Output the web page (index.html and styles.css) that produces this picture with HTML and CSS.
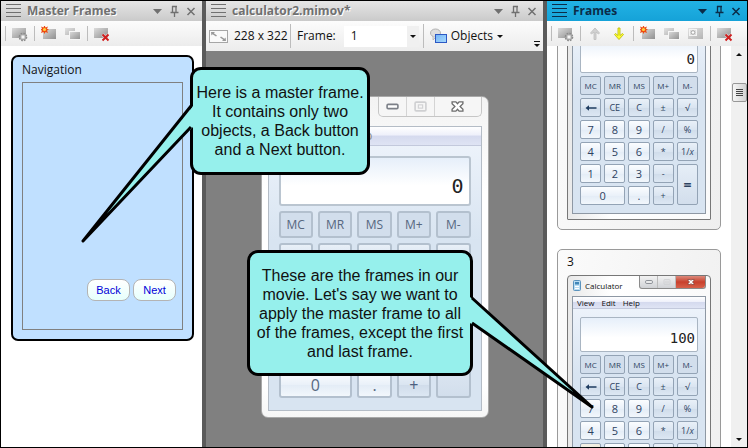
FILE: index.html
```
<!DOCTYPE html>
<html lang="en">
<head>
<meta charset="utf-8">
<title>calculator2.mimov</title>
<link rel="stylesheet" href="styles.css">
</head>
<body>
<svg class="defs" aria-hidden="true">
  <defs>
    <linearGradient id="grey" x1="0" y1="0" x2="1" y2="1"><stop offset="0" stop-color="#dcdcdc"/><stop offset="1" stop-color="#8f8f8f"/></linearGradient>
    <linearGradient id="pale" x1="0" y1="0" x2="1" y2="1"><stop offset="0" stop-color="#e2e2e2"/><stop offset="1" stop-color="#b4b4b4"/></linearGradient>
    <linearGradient id="blue" x1="0" y1="0" x2="1" y2="1"><stop offset="0" stop-color="#74b4f6"/><stop offset="1" stop-color="#a8dafc"/></linearGradient>
  </defs>
  <symbol id="i-lines" viewBox="0 0 15 14"><path d="M0 .5h15M0 4.500h15M0 8.500h15M0 12.500h15" stroke="currentColor" stroke-width="1"/></symbol>
  <symbol id="i-caret" viewBox="0 0 16 16"><path d="M4 6h9l-4.500 5z" fill="currentColor"/></symbol>
  <symbol id="i-pin" viewBox="0 0 16 16"><path d="M6 3.500h5M6.500 3v6M10 3v6M4.500 9.500h8M8.500 10v4" fill="none" stroke="currentColor" stroke-width="1.300"/></symbol>
  <symbol id="i-close" viewBox="0 0 16 16"><path d="M4.500 5l7 7M11.500 5l-7 7" stroke="currentColor" stroke-width="1.500"/></symbol>
  <symbol id="i-settings" viewBox="0 0 16 16"><rect x="0" y="2" width="14" height="10" fill="url(#grey)"/><circle cx="11" cy="11" r="3.200" fill="#c8c8c8" stroke="#8a8a8a" stroke-width="2.200" stroke-dasharray="1.500 1"/><circle cx="11" cy="11" r="2.800" fill="#d2d2d2" stroke="#999" stroke-width=".8"/><circle cx="11" cy="11" r="1" fill="#fff"/></symbol>
  <symbol id="i-new" viewBox="0 0 16 16"><rect x="2" y="3" width="13" height="10" fill="url(#grey)"/><path d="M3.500 -1l1 2.500 2.500-1-1 2.300 2 .9-2 .9 1 2.300-2.500-1-1 2-1-2-2.500 1 1-2.300-2-.9 2-.9-1-2.300 2.500 1z" fill="#ee4a10"/><circle cx="3.500" cy="3.500" r="1.600" fill="#ffd23c"/></symbol>
  <symbol id="i-copy" viewBox="0 0 16 16"><rect x="0" y="2" width="10" height="7" fill="url(#pale)"/><rect x="4.500" y="5.500" width="11" height="8" fill="url(#grey)" stroke="#f6f6f6"/></symbol>
  <symbol id="i-delete" viewBox="0 0 16 16"><rect x="0" y="2" width="14" height="10" fill="url(#grey)"/><path d="M8.500 8.500l6 6M14.500 8.500l-6 6" stroke="#fff" stroke-width="3.500" opacity=".5"/><path d="M8.500 8.500l6 6M14.500 8.500l-6 6" stroke="#cf2020" stroke-width="2"/></symbol>
  <symbol id="i-object" viewBox="0 0 16 16"><rect x="0" y="2" width="15" height="11" fill="url(#pale)"/><rect x="1.500" y="3.500" width="7" height="6" fill="#ddd" stroke="#f4f4f4"/><circle cx="5" cy="6.500" r="1.800" fill="#fff" stroke="#a8a8a8"/></symbol>
  <symbol id="i-up" viewBox="0 0 16 16"><path d="M8 2l4.500 5-1 1L9 6v7.500H7V6L4.500 8l-1-1z" fill="#d2d2d2" stroke="#bcbcbc" stroke-width=".8"/></symbol>
  <symbol id="i-down" viewBox="0 0 16 16"><path d="M8 13.500L3.500 8.500l1-1L7 9.500V2h2v7.500l2.500-2 1 1z" fill="#ffff2e" stroke="#bcbc14" stroke-width=".9"/></symbol>
  <symbol id="i-min" viewBox="0 0 12 6"><rect x="1" y="1" width="10" height="4" rx="1" fill="#fff" stroke="#7c8088" stroke-width="1.500"/></symbol>
  <symbol id="i-max" viewBox="0 0 12 10"><rect x="1" y="1" width="10" height="8" rx="1" fill="none" stroke="#cfd0d2" stroke-width="1.500"/><rect x="4" y="3.500" width="4" height="3" fill="none" stroke="#cfd0d2"/></symbol>
  <symbol id="i-x" viewBox="0 0 12 10"><path d="M1 .7h3.500L6 2.400 7.500.7H11v1.800L8.400 5 11 7.500v1.800H7.500L6 7.600 4.500 9.300H1V7.500L3.600 5 1 2.500z" fill="#fff" stroke="var(--x-edge)" stroke-width="1.200"/></symbol>
  <symbol id="i-back" viewBox="0 0 12 8"><path d="M.5 4L4 1.300v2h7.500v1.400H4v2z" fill="#1f3c60"/></symbol>
</svg>

<main class="app">
  <section class="panel">
    <header class="panel-head">
      <svg class="lines"><use href="#i-lines"/></svg>
      <h2>Master Frames</h2>
      <button class="tool" aria-label="Menu"><svg><use href="#i-caret"/></svg></button>
      <button class="tool" aria-label="Pin"><svg><use href="#i-pin"/></svg></button>
      <button class="tool" aria-label="Close"><svg><use href="#i-close"/></svg></button>
    </header>
    <div class="toolbar">
      <i class="sep"></i>
      <button class="icon-btn" aria-label="Properties"><svg><use href="#i-settings"/></svg></button>
      <i class="sep"></i>
      <button class="icon-btn" aria-label="New frame"><svg><use href="#i-new"/></svg></button>
      <button class="icon-btn" aria-label="Duplicate frame"><svg><use href="#i-copy"/></svg></button>
      <i class="sep"></i>
      <button class="icon-btn" aria-label="Delete frame"><svg><use href="#i-delete"/></svg></button>
    </div>
    <div class="master-pane">
      <article class="master">
        <h3>Navigation</h3>
        <div class="master-canvas">
          <button class="nav-btn">Back</button>
          <button class="nav-btn">Next</button>
        </div>
      </article>
    </div>
  </section>

  <section class="panel">
    <header class="panel-head">
      <svg class="lines"><use href="#i-lines"/></svg>
      <h2>calculator2.mimov*</h2>
      <button class="tool" aria-label="Menu"><svg><use href="#i-caret"/></svg></button>
      <button class="tool" aria-label="Pin"><svg><use href="#i-pin"/></svg></button>
      <button class="tool" aria-label="Close"><svg><use href="#i-close"/></svg></button>
    </header>
    <div class="toolbar toolbar-doc">
      <svg class="size-icon" viewBox="0 0 19 13"><rect x=".5" y=".5" width="18" height="12" fill="#fafafa" stroke="#a6a6a6"/><path d="M2 2h4L4.800 3.200 8 5.600l-1 1L3.600 4.200 2.400 5.500zM17 11h-4l1.200-1.200L11 7.400l1-1 3.400 2.400 1.200-1.300z" fill="#9a9a9a"/></svg>
      <span class="size">228 x 322</span>
      <i class="sep"></i>
      <label class="frame-label" for="frame">Frame:</label>
      <span class="combo">
        <select id="frame"><option>1</option></select>
        <span class="combo-arrow"><i class="tri"></i></span>
      </span>
      <i class="sep"></i>
      <button class="objects">
        <svg viewBox="0 0 17 16"><ellipse cx="5.500" cy="5" rx="5" ry="4" fill="#dedede" stroke="#b2b2b2"/><path d="M3 8v4l3-3" fill="#dedede" stroke="#b2b2b2" stroke-width=".8"/><rect x="5.500" y="6.500" width="11" height="8" fill="url(#blue)" stroke="#2c58c4"/></svg>
        Objects <i class="tri"></i>
      </button>
      <button class="overflow" aria-label="More"><i class="tri"></i></button>
    </div>
    <div class="stage">
      <div class="calc calc-large">
        <div class="calc-title">
          <div class="calc-controls">
            <button aria-label="Minimize"><svg><use href="#i-min"/></svg></button>
            <button aria-label="Maximize"><svg><use href="#i-max"/></svg></button>
            <button class="shut" aria-label="Close"><svg><use href="#i-x"/></svg></button>
          </div>
        </div>
        <div class="calc-body">
          <nav class="calc-menu"><a>Help</a></nav>
          <output class="display">0</output>
          <div class="keys">
            <button class="fn">MC</button><button class="fn">MR</button><button class="fn">MS</button><button class="fn">M+</button><button class="fn">M-</button>
            <button class="ed"></button><button class="ed"></button><button class="ed"></button><button class="ed"></button><button class="ed"></button>
            <button></button><button></button><button></button><button class="op"></button><button class="op"></button>
            <button></button><button></button><button></button><button class="op"></button><button class="op"></button>
            <button></button><button></button><button></button><button class="op"></button><button class="eq"></button>
            <button class="zero">0</button><button>.</button><button class="op">+</button>
          </div>
        </div>
      </div>
    </div>
  </section>

  <section class="panel panel-active">
    <header class="panel-head">
      <svg class="lines"><use href="#i-lines"/></svg>
      <h2>Frames</h2>
      <button class="tool" aria-label="Menu"><svg><use href="#i-caret"/></svg></button>
      <button class="tool" aria-label="Pin"><svg><use href="#i-pin"/></svg></button>
      <button class="tool" aria-label="Close"><svg><use href="#i-close"/></svg></button>
    </header>
    <div class="toolbar">
      <i class="sep"></i>
      <button class="icon-btn" aria-label="Properties"><svg><use href="#i-settings"/></svg></button>
      <i class="sep"></i>
      <button class="icon-btn" aria-label="Move up"><svg><use href="#i-up"/></svg></button>
      <button class="icon-btn" aria-label="Move down"><svg><use href="#i-down"/></svg></button>
      <i class="sep"></i>
      <button class="icon-btn" aria-label="New frame"><svg><use href="#i-new"/></svg></button>
      <button class="icon-btn" aria-label="Duplicate frame"><svg><use href="#i-copy"/></svg></button>
      <button class="icon-btn" aria-label="Apply master"><svg><use href="#i-object"/></svg></button>
      <i class="sep"></i>
      <button class="icon-btn" aria-label="Delete frame"><svg><use href="#i-delete"/></svg></button>
    </div>
    <div class="frames-pane">
      <div class="frames-view">
        <div class="frames-list">
          <article class="frame">
            <h3></h3>
            <div class="calc">
              <div class="calc-title"></div>
              <div class="calc-body">
                <nav class="calc-menu"></nav>
                <output class="display">0</output>
                <div class="keys">
                  <button class="fn">MC</button><button class="fn">MR</button><button class="fn">MS</button><button class="fn">M+</button><button class="fn">M-</button>
                  <button class="ed" aria-label="Backspace"><svg><use href="#i-back"/></svg></button><button class="ed">CE</button><button class="ed">C</button><button class="ed">±</button><button class="ed">√</button>
                  <button>7</button><button>8</button><button>9</button><button class="op">/</button><button class="op">%</button>
                  <button>4</button><button>5</button><button>6</button><button class="op">*</button><button class="op">1/<em>x</em></button>
                  <button>1</button><button>2</button><button>3</button><button class="op">-</button><button class="eq">=</button>
                  <button class="zero">0</button><button>.</button><button class="op">+</button>
                </div>
              </div>
            </div>
          </article>
          <article class="frame">
            <h3>3</h3>
            <div class="calc">
              <div class="calc-title">
                <svg class="calc-icon" viewBox="0 0 8 11"><rect x=".5" y=".5" width="7" height="10" rx="1" fill="#b9dcf2" stroke="#5b93bd"/><rect x="2" y="2" width="4" height="2.500" fill="#3f86b8"/><path d="M2 6.500h4M2 8.500h4" stroke="#fff"/></svg>
                <span class="calc-name">Calculator</span>
                <div class="calc-controls">
                  <button aria-label="Minimize"><svg><use href="#i-min"/></svg></button>
                  <button aria-label="Maximize"><svg><use href="#i-max"/></svg></button>
                  <button class="shut" aria-label="Close"><svg><use href="#i-x"/></svg></button>
                </div>
              </div>
              <div class="calc-body">
                <nav class="calc-menu"><a>View</a><a>Edit</a><a>Help</a></nav>
                <output class="display">100</output>
                <div class="keys">
                  <button class="fn">MC</button><button class="fn">MR</button><button class="fn">MS</button><button class="fn">M+</button><button class="fn">M-</button>
                  <button class="ed" aria-label="Backspace"><svg><use href="#i-back"/></svg></button><button class="ed">CE</button><button class="ed">C</button><button class="ed">±</button><button class="ed">√</button>
                  <button>7</button><button>8</button><button>9</button><button class="op">/</button><button class="op">%</button>
                  <button>4</button><button>5</button><button>6</button><button class="op">*</button><button class="op">1/<em>x</em></button>
                  <button class="pressed"></button><button></button><button></button><button class="op"></button><button class="eq"></button>
                  <button class="zero"></button><button></button><button class="op"></button>
                </div>
              </div>
            </div>
          </article>
        </div>
      </div>
      <div class="scrollbar">
        <button class="scroll-up" aria-label="Scroll up"><i class="tri tri-up"></i></button>
        <button class="scroll-thumb" aria-label="Scroll position"><i></i><i></i><i></i><i></i></button>
        <button class="scroll-down" aria-label="Scroll down"><i class="tri"></i></button>
      </div>
    </div>
  </section>
</main>

<aside class="callout callout-master">
  <svg class="tail" viewBox="0 0 112 140"><path d="M112 3L2 138L112 24z" fill="#96f0ec"/><path d="M110 3L2 138L110 24" fill="none" stroke="#000" stroke-width="3" stroke-linejoin="round"/></svg>
  <p>Here is a master frame.<br>It contains only two<br>objects, a Back button<br>and a Next button.</p>
</aside>
<aside class="callout callout-frames">
  <svg class="tail" viewBox="0 0 126 114"><path d="M0 2L122 112L0 28z" fill="#96f0ec"/><path d="M2 3L122 112L2 28" fill="none" stroke="#000" stroke-width="3" stroke-linejoin="round"/></svg>
  <p>These are the frames in our<br>movie. Let's say we want to<br>apply the master frame to all<br>of the frames, except the first<br>and last frame.</p>
</aside>
</body>
</html>
```
FILE: styles.css
```
* { box-sizing: border-box; }

body {
  margin: 0;
  position: relative;
  overflow: hidden;
  font: 12px/16px "Open Sans", "Noto Sans", sans-serif;
  color: #111;
}

h2, h3, p { margin: 0; font-size: inherit; }

button {
  margin: 0;
  padding: 0;
  border: 0;
  background: none;
  color: inherit;
  font: inherit;
}

.defs { position: absolute; width: 0; height: 0; }

.app {
  display: grid;
  grid-template-columns: 201px 1fr 200px;
  gap: 4px;
  height: 100vh;
  border: 1px solid #000;
  background: #5a5a5a;
}

.panel {
  display: flex;
  flex-direction: column;
  min-width: 0;
  min-height: 0;
  background: #fff;
}

.panel-head {
  display: flex;
  align-items: center;
  flex: none;
  height: 20px;
  padding: 0 2px 0 5px;
  background: linear-gradient(#e6e6e6, #cacaca);
  color: #707070;
}

.panel-head h2 {
  flex: 1;
  margin-left: 6px;
  font-weight: 700;
  text-shadow: 1px 1px 0 #fff;
}

.lines { width: 15px; height: 14px; }

.tool { width: 17px; height: 16px; }
.tool svg { display: block; width: 16px; height: 16px; }

.panel-active .panel-head {
  background: linear-gradient(#22b2e4, #15a2d8);
  color: #0b2c48;
}
.panel-active .panel-head h2 { text-shadow: none; }

.toolbar {
  display: flex;
  align-items: center;
  flex: none;
  height: 25px;
  padding-left: 4px;
  background: linear-gradient(#fcfcfc, #ececec);
}

.sep {
  flex: none;
  width: 1px;
  height: 15px;
  margin: 0 2px;
  background: #bcbcbc;
}
.toolbar > .sep:first-child { margin-left: 0; }

.icon-btn { flex: none; width: 24px; height: 20px; padding: 2px 4px; }
.icon-btn svg { display: block; width: 16px; height: 16px; overflow: visible; }

.tri {
  display: inline-block;
  border: 3px solid transparent;
  border-top-color: #111;
  border-bottom: 0;
}
.tri-up { border: 3px solid transparent; border-bottom-color: #111; border-top: 0; }

/* Master frames */
.master-pane { flex: 1; padding: 9px 8px 0 10px; }

.master {
  padding: 5px 9px 9px;
  border: 2px solid #000;
  border-radius: 7px;
  background: #c0e0ff;
}

.master h3, .frame h3 { font-weight: 400; }

.master-canvas {
  display: flex;
  justify-content: flex-end;
  align-items: flex-end;
  gap: 3px;
  height: 248px;
  margin-top: 4px;
  padding: 0 6px 28px;
  border: 1px solid #808080;
}

.nav-btn {
  width: 43px;
  height: 22px;
  border: 1px solid #b4b4b4;
  border-radius: 8px;
  background: linear-gradient(#fff, #e6fffc);
  color: #0000d8;
  font: 11px/16px "Liberation Sans", sans-serif;
}

/* Document */
.toolbar-doc { height: 30px; padding-left: 3px; }
.toolbar-doc .sep { height: 24px; }
.size-icon { flex: none; width: 19px; height: 13px; }
.size { width: 54px; margin-left: 6px; white-space: nowrap; }
.frame-label { margin-left: 4px; }

.combo {
  display: flex;
  width: 75px;
  height: 21px;
  margin: 0 2px 0 8px;
  background: #fff;
}
.combo select {
  flex: 1;
  padding: 0 7px;
  border: 0;
  appearance: none;
  background: none;
  font: inherit;
  color: inherit;
}
.combo-arrow {
  display: grid;
  place-items: center;
  width: 12px;
  background: #f0f0f0;
}

.objects { display: flex; align-items: center; gap: 4px; margin-left: 4px; }
.objects svg { width: 17px; height: 16px; }

.overflow {
  display: grid;
  align-self: flex-end;
  margin: 0 3px 4px auto;
  padding-top: 2px;
  border-top: 1px solid #111;
}

.stage {
  display: flex;
  flex: 1;
  justify-content: center;
  align-items: flex-start;
  padding-top: 45px;
  background: #808080;
}

/* Calculator picture, thumbnail size by default */
.calc {
  --x-edge: #7a3a34;
  width: 144px;
  padding: 0 4px 5px;
  border: 1px solid #777;
  border-radius: 4px 4px 1px 1px;
  background: linear-gradient(90deg, #e9e9e9, #fff 30%, #fafafa);
  font-size: 8px;
  line-height: 12px;
}

.calc-title { display: flex; justify-content: flex-end; height: 20px; align-items: flex-start; gap: 4px; }
.calc-icon { width: 8px; height: 11px; margin: 4px 0 0 1px; }
.calc-name { flex: 1; padding-top: 4px; color: #111; }

.calc-controls {
  display: flex;
  height: 13px;
  border: 1px solid #8a8a8a;
  border-top: 0;
  border-radius: 0 0 3px 3px;
  background: linear-gradient(#f2f2f2, #d0d2d6);
}
.calc-controls button {
  display: grid;
  place-items: center;
  width: 18px;
  border-right: 1px solid #bbb;
}
.calc-controls svg { width: 8px; height: 6px; }
.calc-controls .shut {
  width: 29px;
  border: 0;
  border-radius: 0 0 3px 0;
  background: linear-gradient(#dc8a7c, #c8402c 50%, #d8604a);
}

.calc-body {
  padding-bottom: 8px;
  border: 1px solid #8e98a4;
  background: linear-gradient(#f0f5fc, #d8e4f1 40%, #d8e4f1);
}

.calc-menu {
  display: flex;
  gap: 7px;
  height: 12px;
  padding-left: 4px;
  border-bottom: 1px solid #c3c9dc;
  background: linear-gradient(#fff, #eef0fa 45%, #d5daee 50%, #dfe4f4);
  color: #111;
}

.display {
  display: block;
  height: 35px;
  margin: 8px 7px 3px;
  padding: 12px 2px 0;
  border: 1px solid #a9b5c2;
  border-radius: 2px;
  background: linear-gradient(#e6effa, #fff 60%);
  color: #222;
  font: 14px/16px "DejaVu Sans Mono", monospace;
  text-align: right;
}

.keys {
  display: grid;
  grid-template-columns: repeat(5, 1fr);
  grid-auto-rows: 19px;
  gap: 3px;
  margin: 0 7px;
}
.keys button {
  border: 1px solid #93a3b5;
  border-radius: 2px;
  background: linear-gradient(#fbfdff, #eaf1f9 50%, #e3ecf6 51%, #f2f7fc);
  color: #2d4260;
  font-size: 11px;
}
.keys .fn { background: #d2deec; font-size: 8px; }
.keys .ed, .keys .op { background: linear-gradient(#e9f0f8, #dae5f1 50%, #d0dcea 51%, #dce7f3); font-size: 9px; }
.keys .eq { grid-row: span 2; background: linear-gradient(#e6eef7, #d2deec); font-size: 14px; font-weight: 700; }
.keys .zero { grid-column: span 2; }
.keys .pressed { background: radial-gradient(circle at 100% 100%, #e6d8b4, #f2f0e4 70%); }
.keys svg { display: block; width: 12px; height: 8px; margin: auto; }

.calc-large {
  --x-edge: #6c6c6c;
  width: 228px;
  padding: 0 6px 6px;
  border-color: #a8a8a8;
  border-radius: 7px;
  background: linear-gradient(#f3f3f3, #fff 30%, #fff 90%, #f6f6f6);
  font-size: 12px;
  line-height: 18px;
}
.calc-large .calc-title { height: 29px; }
.calc-large .calc-controls {
  height: 20px;
  border-color: #c6c6c6;
  border-radius: 0 0 5px 5px;
  background: #f6f6f6;
}
.calc-large .calc-controls button { width: 28px; border-color: #d4d4d4; }
.calc-large .calc-controls .shut { width: 46px; background: none; }
.calc-large .calc-controls svg { width: 13px; height: 11px; }
.calc-large .calc-body { padding-bottom: 12px; border-color: #b4bcc6; }
.calc-large .calc-menu { height: 19px; padding-left: 78px; color: #888; }
.calc-large .display {
  height: 50px;
  margin: 10px 10px 5px;
  padding: 17px 5px 0;
  border: 2px solid #bac5d0;
  border-radius: 3px;
  font-size: 20px;
  line-height: 22px;
}
.calc-large .keys { grid-auto-rows: 27px; gap: 5px; margin: 0 10px; }
.calc-large .keys button { border: 2px solid #b3c0ce; border-radius: 3px; color: #56677f; font-size: 16px; }
.calc-large .keys .fn { font-size: 12px; }
.calc-large .keys .op { color: #4c6080; }

/* Frames list */
.frames-pane { display: flex; flex: 1; min-height: 0; }
.frames-view { flex: 1; overflow: hidden; }

/* The list is scrolled part of the way into the second frame */
.frames-list {
  display: flex;
  flex-direction: column;
  gap: 19px;
  margin-top: -76px;
  padding: 0 10px;
}
.frame {
  padding: 4px 9px 9px;
  border: 1px solid #9a9a9a;
  border-radius: 5px;
  background: linear-gradient(100deg, #fbfbfb, #efefef);
}
.frame h3 { min-height: 16px; margin-bottom: 5px; }

.scrollbar {
  display: flex;
  flex-direction: column;
  align-items: center;
  width: 16px;
  background: #f0f0f0;
}
.scroll-up, .scroll-down { display: grid; place-items: center; width: 16px; height: 17px; }
.scroll-down { margin-top: auto; height: 15px; }
.scroll-thumb {
  display: flex;
  flex-direction: column;
  justify-content: center;
  align-items: center;
  gap: 1px;
  width: 15px;
  height: 19px;
  margin-top: 20px;
  border: 1px solid #979797;
  border-radius: 2px;
  background: linear-gradient(90deg, #f6f6f6, #d2d2d2);
}
.scroll-thumb i { width: 7px; height: 1px; background: #444; }

/* Callouts float over the panels they explain */
.callout {
  position: absolute;
  display: grid;
  place-items: center;
  border: 3px solid #000;
  border-radius: 11px;
  background: #96f0ec;
  color: #111;
  font: 16px/19px "Liberation Sans", Arial, sans-serif;
  text-align: center;
  white-space: nowrap;
}
.callout-master { left: 190px; top: 67px; width: 180px; height: 108px; }
.callout-frames { left: 247px; top: 250px; width: 226px; height: 126px; }
.tail { position: absolute; }
.callout-master .tail { left: -112px; top: 33px; width: 112px; height: 140px; }
.callout-frames .tail { left: 220px; top: 42px; width: 126px; height: 114px; }
```
